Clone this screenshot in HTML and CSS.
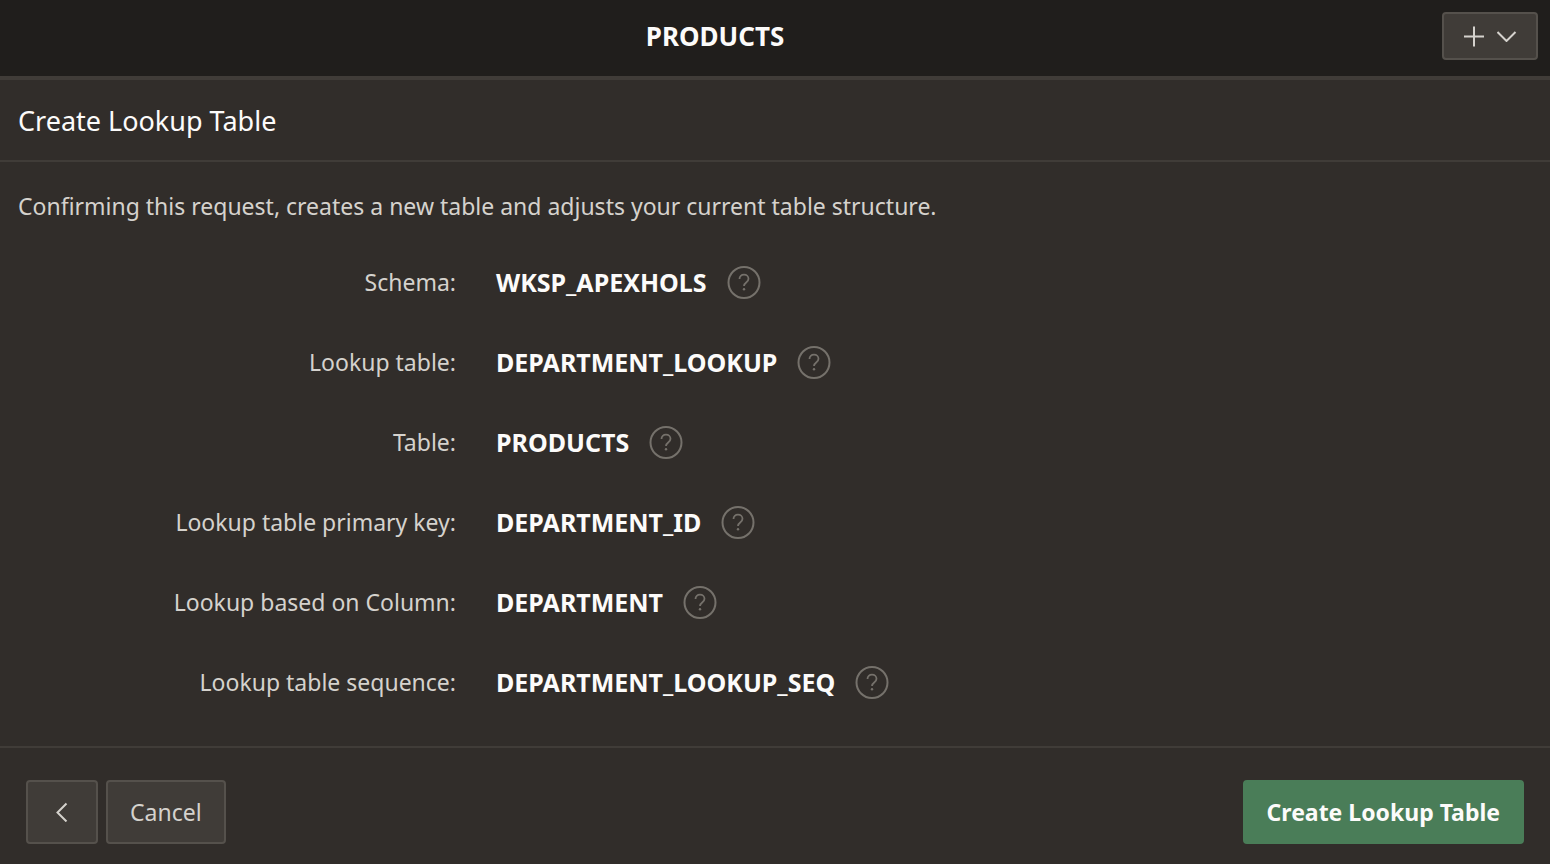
FILE: index.html
```html
<!DOCTYPE html>
<html lang="en">
<head>
<meta charset="utf-8">
<meta name="viewport" content="width=device-width, initial-scale=1">
<title>Create Lookup Table</title>
<link rel="stylesheet" href="styles.css">
</head>
<body>
<svg class="sprite" aria-hidden="true">
  <symbol id="help" viewBox="0 0 34 34">
    <circle cx="17" cy="17.500" r="15.500" stroke-width="2"/>
    <path d="M12.500 14c0-2.600 1.900-4.400 4.500-4.400s4.500 1.800 4.500 4.200c0 3.900-4.500 3.600-4.500 7.200" stroke-width="1.800"/>
    <circle cx="17" cy="24.300" r="1.200" fill="currentColor" stroke="none"/>
  </symbol>
</svg>
<header class="topbar">
  <h1 class="topbar-title">PRODUCTS</h1>
  <button class="btn btn-menu" type="button" aria-label="Create">
    <svg class="icon-plus" viewBox="0 0 22 22"><path d="M11 1.500v20M1 11.500h20"/></svg>
    <svg class="icon-down" viewBox="0 0 20 12"><path d="M.500 2l9 9 9-9"/></svg>
  </button>
</header>
<section class="heading">
  <h2 class="heading-title">Create Lookup Table</h2>
</section>
<main class="content">
  <p class="intro">Confirming this request, creates a new table and adjusts your current table structure.</p>
  <dl class="fields">
    <div class="field"><dt class="label">Schema:</dt><dd class="value">WKSP_APEXHOLS <button class="help" type="button" aria-label="Help: Schema"><svg class="icon-help"><use href="#help"/></svg></button></dd></div>
    <div class="field"><dt class="label">Lookup table:</dt><dd class="value">DEPARTMENT_LOOKUP <button class="help" type="button" aria-label="Help: Lookup table"><svg class="icon-help"><use href="#help"/></svg></button></dd></div>
    <div class="field"><dt class="label">Table:</dt><dd class="value">PRODUCTS <button class="help" type="button" aria-label="Help: Table"><svg class="icon-help"><use href="#help"/></svg></button></dd></div>
    <div class="field"><dt class="label">Lookup table primary key:</dt><dd class="value">DEPARTMENT_ID <button class="help" type="button" aria-label="Help: Lookup table primary key"><svg class="icon-help"><use href="#help"/></svg></button></dd></div>
    <div class="field"><dt class="label">Lookup based on Column:</dt><dd class="value">DEPARTMENT <button class="help" type="button" aria-label="Help: Lookup based on Column"><svg class="icon-help"><use href="#help"/></svg></button></dd></div>
    <div class="field"><dt class="label">Lookup table sequence:</dt><dd class="value">DEPARTMENT_LOOKUP_SEQ <button class="help" type="button" aria-label="Help: Lookup table sequence"><svg class="icon-help"><use href="#help"/></svg></button></dd></div>
  </dl>
</main>
<footer class="actions">
  <button class="btn btn-back" type="button" aria-label="Previous">
    <svg class="icon-back" viewBox="0 0 12 20"><path d="M10.500 1.500l-9 9 9 9"/></svg>
  </button>
  <button class="btn btn-cancel" type="button">Cancel</button>
  <button class="btn btn-primary" type="submit">Create Lookup Table</button>
</footer>
</body>
</html>
```
FILE: styles.css
```css
* {
  box-sizing: border-box;
}

body {
  margin: 0;
  min-height: 100vh;
  display: flex;
  flex-direction: column;
  background: #312d2a;
  color: #d5d2cd;
  font-family: "Noto Sans", "Open Sans", sans-serif;
  font-size: 23px;
  line-height: 32px;
}

svg {
  display: block;
  fill: none;
  stroke: currentColor;
  stroke-width: 2;
}

.sprite {
  position: absolute;
  width: 0;
  height: 0;
}

.topbar {
  display: flex;
  align-items: flex-start;
  gap: 12px;
  padding: 12px 12px 16px 0;
  background: #201e1c;
  border-bottom: 4px solid #403c38;
}

.topbar-title {
  flex: 1;
  margin: 0;
  padding-top: 8px;
  text-align: center;
  color: #fcfbfa;
  font-size: 26px;
  font-weight: 700;
  line-height: 32px;
}

.btn {
  display: flex;
  align-items: center;
  justify-content: center;
  height: 64px;
  margin: 0;
  border: 2px solid #55514c;
  border-radius: 4px;
  background: #403c38;
  color: #d5d2cd;
  font: inherit;
  cursor: pointer;
}

.btn-menu {
  width: 96px;
  height: 48px;
  padding: 0;
  gap: 12px;
}

.icon-plus {
  width: 22px;
  height: 22px;
}

.icon-down {
  width: 20px;
  height: 12px;
}

.heading {
  padding: 24px 18px 22px;
  border-bottom: 2px solid #403c38;
}

.heading-title {
  margin: 0;
  color: #fcfbfa;
  font-size: 27px;
  font-weight: 400;
  line-height: 34px;
}

.content {
  flex: 1;
  padding: 28px 18px 24px;
}

.intro {
  margin: 0 0 20px;
}

.fields {
  margin: 0;
}

.field {
  display: grid;
  grid-template-columns: 438px 1fr;
  column-gap: 40px;
  align-items: center;
  height: 80px;
}

.label {
  text-align: right;
}

.value {
  display: flex;
  align-items: center;
  gap: 20px;
  margin: 0;
  color: #fcfbfa;
  font-size: 25px;
  font-weight: 700;
}

.help {
  padding: 0;
  border: 0;
  background: none;
  color: #75716b;
  cursor: pointer;
}

.icon-help {
  width: 34px;
  height: 34px;
}

.actions {
  display: flex;
  gap: 8px;
  padding: 32px 26px 20px;
  border-top: 2px solid #403c38;
}

.btn-back {
  width: 72px;
  padding: 0;
}

.icon-back {
  width: 12px;
  height: 20px;
}

.btn-cancel {
  padding: 0 22px;
}

.btn-primary {
  margin-left: auto;
  padding: 0 22px;
  border-color: #4a7d58;
  background: #4a7d58;
  color: #fcfbfa;
  font-weight: 700;
}
```
